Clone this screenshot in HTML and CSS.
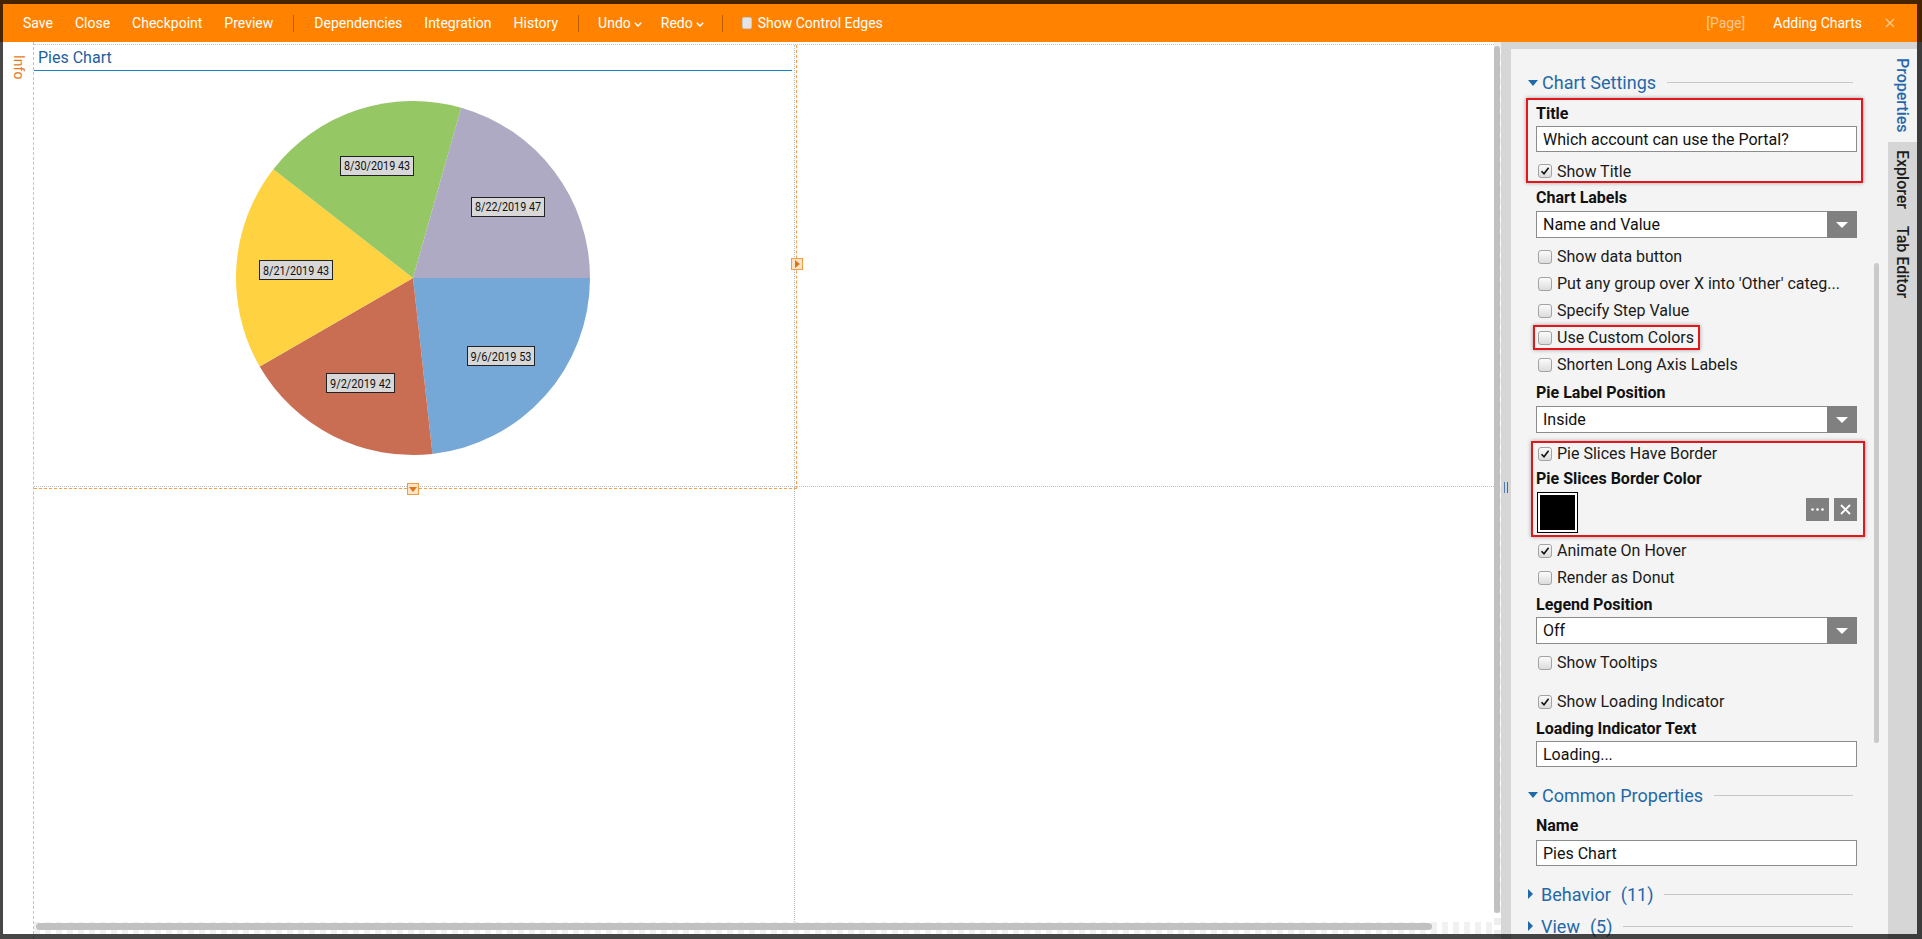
FILE: index.html
```html
<!DOCTYPE html>
<html>
<head>
<meta charset="utf-8">
<title>Adding Charts</title>
<link rel="stylesheet" href="styles.css">
</head>
<body>
<div class="app">
  <header class="toolbar">
    <nav class="tb-group">
      <span class="tb-item">Save</span>
      <span class="tb-item">Close</span>
      <span class="tb-item">Checkpoint</span>
      <span class="tb-item">Preview</span>
      <span class="tb-sep"></span>
      <span class="tb-item">Dependencies</span>
      <span class="tb-item">Integration</span>
      <span class="tb-item">History</span>
      <span class="tb-sep"></span>
      <span class="tb-item tb-narrow">Undo<svg class="chev" width="8" height="5" viewBox="0 0 8 5"><path d="M.8 .8L4 4L7.2 .8" fill="none" stroke="#fff" stroke-width="1.5"/></svg></span>
      <span class="tb-item tb-narrow">Redo<svg class="chev" width="8" height="5" viewBox="0 0 8 5"><path d="M.8 .8L4 4L7.2 .8" fill="none" stroke="#fff" stroke-width="1.5"/></svg></span>
      <span class="tb-sep"></span>
      <span class="tb-item tb-narrow"><span class="tb-cb"></span>Show Control Edges</span>
    </nav>
    <div class="tb-right">
      <span class="tb-page">[Page]</span>
      <span class="tb-title">Adding Charts</span>
      <svg class="tb-close" width="10" height="10" viewBox="0 0 10 10"><path d="M1 1L9 9M9 1L1 9" stroke="#ffcc99" stroke-width="1.3"/></svg>
    </div>
  </header>

  <div class="main">
    <div class="strip"><span class="info">Info</span></div>

    <div class="canvas">
      <div class="grid">
        <div class="cell cell-a">
          <div class="chart">
            <div class="chart-title">Pies Chart</div>
            <svg class="pie" width="760" height="415" viewBox="0 0 760 415">
              <path d="M379 207 L556 207 A177 177 0 0 1 398.47 382.92 Z" fill="#75a8d6"/>
              <path d="M379 207 L398.47 382.92 A177 177 0 0 1 225.71 295.5 Z" fill="#ca6e53"/>
              <path d="M379 207 L225.71 295.5 A177 177 0 0 1 239.33 98.29 Z" fill="#fed241"/>
              <path d="M379 207 L239.33 98.29 A177 177 0 0 1 427.16 36.67 Z" fill="#96c765"/>
              <path d="M379 207 L427.16 36.67 A177 177 0 0 1 556 207 Z" fill="#afaac3"/>
              <g class="plabel">
                <rect x="306.5" y="85.5" width="73" height="19"/>
                <text x="343" y="99" textLength="66" lengthAdjust="spacingAndGlyphs">8/30/2019 43</text>
                <rect x="437.5" y="126.5" width="73" height="19"/>
                <text x="474" y="140" textLength="66" lengthAdjust="spacingAndGlyphs">8/22/2019 47</text>
                <rect x="225.5" y="189.5" width="73" height="19"/>
                <text x="262" y="203.5" textLength="66" lengthAdjust="spacingAndGlyphs">8/21/2019 43</text>
                <rect x="292.5" y="302.5" width="68" height="19"/>
                <text x="326.5" y="316.5" textLength="61" lengthAdjust="spacingAndGlyphs">9/2/2019 42</text>
                <rect x="433.5" y="275.5" width="67" height="19"/>
                <text x="467" y="289.5" textLength="61" lengthAdjust="spacingAndGlyphs">9/6/2019 53</text>
              </g>
            </svg>
            <div class="sel-outline"></div>
            <span class="marker marker-r"></span>
            <span class="marker marker-b"></span>
          </div>
        </div>
        <div class="cell cell-b"></div>
        <div class="cell cell-c"></div>
        <div class="cell cell-d"></div>
      </div>
      <div class="hscroll"><div class="hthumb"></div></div>
    </div>

    <div class="vscroll"><div class="vthumb"></div></div>

    <div class="split"><span class="handle"></span></div>

    <div class="panel-col">
      <div class="panel">
        <div class="panel-body">
          <section class="sec">
            <div class="sec-head"><span class="tri-down"></span>Chart Settings<span class="sec-line"></span></div>
            <div class="fields">
              <div class="hl hl-title">
                <div class="lbl h26">Title</div>
                <div class="inp">Which account can use the Portal?</div>
                <div class="row"><span class="cb"><svg width="10" height="10" viewBox="0 0 10 10"><path d="M1.5 5.2L4 7.8L8.6 1.8" fill="none" stroke="#111" stroke-width="1.6"/></svg></span>Show Title</div>
              </div>
              <div class="lbl">Chart Labels</div>
              <div class="sel"><span class="sel-text">Name and Value</span><span class="sel-btn"></span></div>
              <div class="rows">
                <div class="row"><span class="cb"></span>Show data button</div>
                <div class="row"><span class="cb"></span>Put any group over X into 'Other' categ...</div>
                <div class="row"><span class="cb"></span>Specify Step Value</div>
                <div class="row"><span class="hl hl-inline"><span class="cb"></span>Use Custom Colors</span></div>
                <div class="row"><span class="cb"></span>Shorten Long Axis Labels</div>
              </div>
              <div class="lbl">Pie Label Position</div>
              <div class="sel"><span class="sel-text">Inside</span><span class="sel-btn"></span></div>
              <div class="hl hl-border">
                <div class="row row-sm"><span class="cb"><svg width="10" height="10" viewBox="0 0 10 10"><path d="M1.5 5.2L4 7.8L8.6 1.8" fill="none" stroke="#111" stroke-width="1.6"/></svg></span>Pie Slices Have Border</div>
                <div class="lbl">Pie Slices Border Color</div>
                <div class="color-row">
                  <span class="swatch"></span>
                  <span class="btns">
                    <span class="btn"><svg width="13" height="3" viewBox="0 0 13 3"><circle cx="1.5" cy="1.5" r="1.3" fill="#fff"/><circle cx="6.5" cy="1.5" r="1.3" fill="#fff"/><circle cx="11.5" cy="1.5" r="1.3" fill="#fff"/></svg></span>
                    <span class="btn"><svg width="11" height="11" viewBox="0 0 11 11"><path d="M1 1L10 10M10 1L1 10" stroke="#fff" stroke-width="1.8"/></svg></span>
                  </span>
                </div>
              </div>
              <div class="row"><span class="cb"><svg width="10" height="10" viewBox="0 0 10 10"><path d="M1.5 5.2L4 7.8L8.6 1.8" fill="none" stroke="#111" stroke-width="1.6"/></svg></span>Animate On Hover</div>
              <div class="row"><span class="cb"></span>Render as Donut</div>
              <div class="lbl h26">Legend Position</div>
              <div class="sel"><span class="sel-text">Off</span><span class="sel-btn"></span></div>
              <div class="row gap5"><span class="cb"></span>Show Tooltips</div>
              <div class="row gap12"><span class="cb"><svg width="10" height="10" viewBox="0 0 10 10"><path d="M1.5 5.2L4 7.8L8.6 1.8" fill="none" stroke="#111" stroke-width="1.6"/></svg></span>Show Loading Indicator</div>
              <div class="lbl h26">Loading Indicator Text</div>
              <div class="inp">Loading...</div>
            </div>
          </section>
          <section class="sec gap14">
            <div class="sec-head"><span class="tri-down"></span>Common Properties<span class="sec-line"></span></div>
            <div class="fields">
              <div class="lbl h29">Name</div>
              <div class="inp">Pies Chart</div>
            </div>
          </section>
          <section class="sec gap14">
            <div class="sec-head"><span class="tri-right"></span>Behavior<span class="sec-count">(11)</span><span class="sec-line"></span></div>
          </section>
          <section class="sec gap2">
            <div class="sec-head"><span class="tri-right"></span>View<span class="sec-count">(5)</span><span class="sec-line"></span></div>
          </section>
        </div>
        <div class="pscroll"><div class="pthumb"></div></div>
      </div>
    </div>

    <aside class="tabs">
      <div class="tab active">Properties</div>
      <div class="tab">Explorer</div>
      <div class="tab">Tab Editor</div>
    </aside>
  </div>
</div>
<div class="frame"></div>
</body>
</html>
```

FILE: styles.css
```css
* { box-sizing: border-box; margin: 0; padding: 0; }
html, body { width: 1922px; height: 939px; overflow: hidden; }
body { font-family: Roboto, "Liberation Sans", Arial, sans-serif; background: #fff; color: #111; }

.app { display: flex; flex-direction: column; height: 939px; }

/* toolbar */
.toolbar { height: 42px; flex: none; background: #ff8300; color: #fff; font-size: 14px;
  display: flex; align-items: center; padding: 4px 0 0 12px; }
.tb-group { display: flex; align-items: center; }
.tb-item { padding: 0 11px; display: flex; align-items: center; white-space: nowrap; }
.tb-item.tb-narrow { padding: 0 9px 0 10px; }
.tb-sep { width: 1px; height: 17px; background: rgba(110, 45, 0, 0.45); margin: 0 9px; }
.chev { margin: 3px 0 0 3px; }
.tb-cb { width: 10px; height: 12px; background: #e4e4e4; border: 1px solid #c9c9c9; border-radius: 2px; margin-right: 6px; }
.tb-right { margin-left: auto; display: flex; align-items: center; padding-right: 27px; }
.tb-page { color: #ffc791; margin-right: 28px; }
.tb-title { margin-right: 23px; }

/* main */
.main { flex: 1; display: flex; min-height: 0; }
.strip { width: 34px; flex: none; background: #fff; padding: 13px 0 0 4px; border-right: 1px dashed #c4c4c4; }
.info { display: block; writing-mode: vertical-rl; width: 29px; line-height: 29px; font-size: 14px; color: #e8771e; }

.canvas { width: 1460px; flex: none; background: #fff; padding-top: 2px; display: flex; flex-direction: column; }
.grid { height: 878px; flex: none; display: grid; grid-template-columns: 761px 1fr; grid-template-rows: 442px 1fr;
  border-top: 1px dotted #c4c4c4; }
.cell-a { border-right: 1px dotted #bdbdbd; border-bottom: 1px dotted #bdbdbd; }
.cell-b { border-bottom: 1px dotted #bdbdbd; }
.cell-c { border-right: 1px dotted #bdbdbd; }

.chart { position: relative; height: 100%; }
.chart-title { height: 26px; margin-right: 2px; padding-left: 4px; border-bottom: 1px solid #1a83c6;
  display: flex; align-items: center; font-size: 16px; color: #1c5f9c; }
.pie { display: block; }
.plabel rect { fill: #d8d8d8; stroke: #222; stroke-width: 1; }
.plabel text { font-family: Roboto, "Liberation Sans", sans-serif; font-size: 12.5px; fill: #111; text-anchor: middle; }

.sel-outline { position: absolute; left: 0; top: 0; right: -3px; bottom: -3px;
  border-right: 1px dashed #f5a04a; border-bottom: 1px dashed #f5a04a; pointer-events: none; }
.marker { position: absolute; width: 12px; height: 12px; background: #fde3c8; border: 1px solid #f39c45;
  display: flex; align-items: center; justify-content: center; }
.marker-r { right: -9px; top: 213px; }
.marker-r::after { content: ""; border-left: 5px solid #d9780f; border-top: 4px solid transparent; border-bottom: 4px solid transparent; margin-left: 1px; }
.marker-b { left: 373px; bottom: -9px; }
.marker-b::after { content: ""; border-top: 5px solid #d9780f; border-left: 4px solid transparent; border-right: 4px solid transparent; margin-top: 1px; }

.hscroll { height: 12px; flex: none; padding: 1px 0 0 2px;
  background: repeating-linear-gradient(to right, #f1f1f1 0 6px, #fff 6px 11px); }
.hthumb { width: 1396px; height: 7px; border-radius: 4px; background: #c1c1c1; }

.vscroll { width: 7px; flex: none; padding-top: 4px;
  background: repeating-linear-gradient(to bottom, #eeeeee 0 7px, #fff 7px 12px); }
.vthumb { width: 6px; height: 867px; border-radius: 3px; background: #c1c1c1; }

.split { width: 10px; flex: none; background: #d6d6d6; display: flex; justify-content: center; padding-top: 440px; }
.handle { width: 4px; height: 11px; border-left: 1px solid #4c7fb5; border-right: 1px solid #a34b3d; }

/* property panel */
.panel-col { width: 377px; flex: none; background: #d6d6d6; padding-top: 7px; display: flex; flex-direction: column; }
.panel { flex: 1; background: #f4f4f4; display: flex; min-height: 0; overflow: hidden; }
.panel-body { width: 363px; flex: none; padding: 19px 17px 0 17px; }
.pscroll { width: 5px; flex: none; padding-top: 214px; }
.pthumb { height: 480px; border-radius: 3px; background: #cacaca; }

.sec-head { height: 30px; display: flex; align-items: center; font-size: 18px; color: #1f69aa; white-space: nowrap; }
.sec:first-child .sec-head { height: 29px; margin-bottom: 1px; }
.tri-down { width: 0; height: 0; border-left: 5px solid transparent; border-right: 5px solid transparent; border-top: 6px solid #1f69aa; margin-right: 4px; }
.tri-right { width: 0; height: 0; border-top: 5px solid transparent; border-bottom: 5px solid transparent; border-left: 5px solid #1f69aa; margin-right: 8px; }
.sec-count { margin-left: 10px; }
.sec-line { flex: 1; height: 1px; background: #c8c8c8; margin: 0 4px 0 11px; }
.gap14 { margin-top: 13px; }
.gap2 { margin-top: 2px; }

.fields { padding-left: 8px; }
.lbl { height: 28px; display: flex; align-items: center; font-size: 16px; font-weight: 700; color: #111; white-space: nowrap; }
.lbl.h26 { height: 26px; }
.lbl.h29 { height: 30px; }
.inp { height: 26px; border: 1px solid #8c8c8c; background: #fff; font-size: 16px; color: #111; padding-left: 6px; display: flex; align-items: center; }
.sel { height: 27px; border: 1px solid #8c8c8c; background: #fff; font-size: 16px; color: #111; display: flex; align-items: center; }
.sel-text { flex: 1; padding-left: 6px; }
.sel-btn { width: 30px; height: 27px; margin-right: -1px; background: #808080; display: flex; align-items: center; justify-content: center; flex: none; }
.sel-btn::after { content: ""; border-top: 6px solid #fff; border-left: 6px solid transparent; border-right: 6px solid transparent; }

.rows { margin-top: 5px; }
.row { height: 27px; display: flex; align-items: center; padding-left: 2px; font-size: 16px; color: #1a1a1a; white-space: nowrap; }
.row.gap5 { margin-top: 5px; }
.row.gap12 { margin-top: 12px; }
.row-sm { height: 21px; }
.cb { width: 14px; height: 14px; flex: none; border: 1px solid #a3a3a3; border-radius: 3px;
  background: linear-gradient(#fbfbfb, #dcdcdc); margin-right: 5px; display: flex; align-items: center; justify-content: center; }

.hl { border: 2px solid #e3161b; box-shadow: 0 0 4px rgba(0, 0, 0, 0.35); }
.hl-title { margin: 1px -6px 0 -10px; padding: 0 4px 0 8px; }
.hl-title .row { margin-top: 9px; height: 20px; }
.hl-border { margin: 8px -8px 0 -5px; padding: 0 6px 2px 3px; }
.hl-inline { display: flex; align-items: center; height: 25px; margin-left: -5px; padding: 0 4px 0 3px; }

.color-row { height: 41px; display: flex; justify-content: space-between; align-items: flex-start; }
.swatch { width: 41px; height: 41px; margin-left: 1px; background: #000; border: 1px solid #000; box-shadow: inset 0 0 0 2px #fff; }
.btns { display: flex; gap: 5px; margin-top: 6px; }
.btn { width: 23px; height: 23px; background: #808080; display: flex; align-items: center; justify-content: center; }

/* vertical tabs */
.tabs { width: 34px; flex: none; background: #d6d6d6; padding-top: 7px; }
.tab { writing-mode: vertical-rl; width: 29px; line-height: 29px; font-size: 16px; font-weight: 500; color: #1d1d1d; padding: 8px 0 9px; white-space: nowrap; }
.tab.active { background: #f4f4f4; color: #2768ad; padding-top: 9px; }

/* window frame shading */
.frame { position: fixed; left: 0; top: 0; width: 1922px; height: 939px; pointer-events: none;
  border-style: solid; border-color: rgba(0, 0, 0, 0.72); border-width: 4px 5px 5px 3px; }
```
